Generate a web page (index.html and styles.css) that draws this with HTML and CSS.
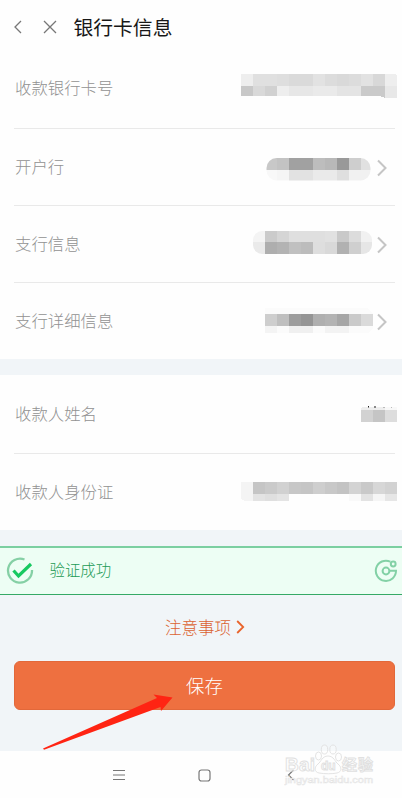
FILE: index.html
```html
<!DOCTYPE html>
<html lang="zh-CN">
<head>
<meta charset="utf-8">
<title>银行卡信息</title>
<link rel="stylesheet" href="styles.css">
</head>
<body>
<main class="screen">
  <header class="topbar">
    <svg class="back" width="10" height="16" viewBox="0 0 10 16"><path d="M8 2 2 8l6 6"/></svg>
    <svg class="close" width="14" height="14" viewBox="0 0 14 14"><path d="m1 1 12 12M13 1 1 13"/></svg>
    <h1>银行卡信息</h1>
  </header>

  <section class="card">
    <div class="row first"><span>收款银行卡号</span>
      <svg class="mask wide" width="156" height="24" shape-rendering="crispEdges">
        <path fill="#eee" d="M0 0h12v12H0z"/><path fill="#e0e0e0" d="M12 0h24v12H12z"/><path fill="#dedede" d="M36 0h12v12H36z"/><path fill="#dadada" d="M48 0h24v12H48z"/><path fill="#e2e2e2" d="M72 0h12v12H72z"/><path fill="#dcdcdc" d="M84 0h12v12H84z"/><path fill="#d9d9d9" d="M96 0h12v12H96z"/><path fill="#dcdcdc" d="M108 0h12v12h-12z"/><path fill="#e2e2e2" d="M120 0h12v12h-12z"/><path fill="#d8d8d8" d="M132 0h12v12h-12z"/><path fill="#eee" d="M144 0h10l2 2v10h-12z"/>
        <path fill="#c8c8c8" d="M0 12h12v10H0z"/><path fill="#d9d9d9" d="M12 12h12v10H12z"/><path fill="#d1d1d1" d="M24 12h12v10H24z"/><path fill="#eee" d="M36 12h12v10H36z"/><path fill="#e7e7e7" d="M48 12h24v10H48z"/><path fill="#eaeaea" d="M72 12h24v10H72z"/><path fill="#e4e4e4" d="M96 12h24v10H96z"/><path fill="#cacaca" d="M120 12h24v12l-6-2h-18z"/><path fill="#e8e8e8" d="M144 12h12v12h-12z"/>
      </svg>
    </div>
    <div class="row bank"><span>开户行</span>
      <svg class="mask" width="132" height="24">
        <defs><clipPath id="pillA"><rect x="25.500" y="1" width="104" height="22.500" rx="10"/></clipPath></defs>
        <g clip-path="url(#pillA)" shape-rendering="crispEdges">
          <path fill="#c8c8c8" d="M24 1h12v12H24z"/><path fill="#c3c3c3" d="M36 1h12v12H36z"/><path fill="#a1a1a1" d="M48 1h24v12H48z"/><path fill="#bdbdbd" d="M72 1h12v12H72z"/><path fill="#b8b8b8" d="M84 1h12v12H84z"/><path fill="#999" d="M96 1h12v12H96z"/><path fill="#cecece" d="M108 1h12v12h-12z"/><path fill="#e1e1e1" d="M120 1h12v12h-12z"/>
          <path fill="#f8f8f8" d="M24 13h12v11H24z"/><path fill="#f5f5f5" d="M36 13h12v11H36z"/><path fill="#e2e2e2" d="M48 13h24v11H48z"/><path fill="#eaeaea" d="M72 13h24v11H72z"/><path fill="#dfdfdf" d="M96 13h12v11H96z"/><path fill="#f1f1f1" d="M108 13h24v11h-24z"/>
        </g>
      </svg>
      <svg class="more" width="10" height="18" viewBox="0 0 10 18"><path d="m1 1.500 7.500 7.500L1 16.500"/></svg>
    </div>
    <div class="row branch"><span>支行信息</span>
      <svg class="mask" width="132" height="24">
        <defs><clipPath id="pillB"><rect x="12" y="0" width="119" height="23" rx="9"/></clipPath></defs>
        <g clip-path="url(#pillB)" shape-rendering="crispEdges">
          <path fill="#f4f4f4" d="M12 0h12v11H12z"/><path fill="#cbcbcb" d="M24 0h12v11H24z"/><path fill="#d5d5d5" d="M36 0h12v11H36z"/><path fill="#dfdfdf" d="M48 0h36v11H48z"/><path fill="#e1e1e1" d="M84 0h12v11H84z"/><path fill="#c9c9c9" d="M96 0h12v11H96z"/><path fill="#dcdcdc" d="M108 0h12v11h-12z"/><path fill="#f1f1f1" d="M120 0h12v11h-12z"/>
          <path fill="#eaeaea" d="M12 11h12v12H12z"/><path fill="#aeaeae" d="M24 11h12v12H24z"/><path fill="#b3b3b3" d="M36 11h12v12H36z"/><path fill="#c0c0c0" d="M48 11h12v12H48z"/><path fill="#bcbcbc" d="M60 11h12v12H60z"/><path fill="#dedede" d="M72 11h12v12H72z"/><path fill="#d9d9d9" d="M84 11h12v12H84z"/><path fill="#b1b1b1" d="M96 11h12v12H96z"/><path fill="#cfcfcf" d="M108 11h12v12h-12z"/><path fill="#e6e6e6" d="M120 11h12v12h-12z"/>
        </g>
      </svg>
      <svg class="more" width="10" height="18" viewBox="0 0 10 18"><path d="m1 1.500 7.500 7.500L1 16.500"/></svg>
    </div>
    <div class="row last"><span>支行详细信息</span>
      <svg class="mask" width="132" height="26" shape-rendering="crispEdges">
        <path fill="#fbfbfb" d="M24 0h103l5 6v14l-5 5H24z"/>
        <path fill="#cecece" d="M24 6h12v12H24z"/><path fill="#bfbfbf" d="M36 6h12v12H36z"/><path fill="#9d9d9d" d="M48 6h12v12H48z"/><path fill="#959595" d="M60 6h12v12H60z"/><path fill="#afafaf" d="M72 6h12v12H72z"/><path fill="#b3b3b3" d="M84 6h12v12H84z"/><path fill="#a6a6a6" d="M96 6h12v12H96z"/><path fill="#cacaca" d="M108 6h12v12h-12z"/><path fill="#dadada" d="M120 6h12v12h-12z"/>
        <path fill="#f4f4f4" d="M24 18h12v7H24z"/><path fill="#f0f0f0" d="M48 18h24v7H48z"/><path fill="#f3f3f3" d="M84 18h24v7H84z"/>
      </svg>
      <svg class="more" width="10" height="18" viewBox="0 0 10 18"><path d="m1 1.500 7.500 7.500L1 16.500"/></svg>
    </div>
  </section>

  <section class="card payee">
    <div class="row name"><span>收款人姓名</span>
      <svg class="mask wide" width="36" height="18" shape-rendering="crispEdges">
        <path fill="#eee" d="M1 3h23v3H0V4z"/><path fill="#f8f8f8" d="M24 3h12v3H24z"/>
        <path fill="#d2d2d2" d="M0 6h12v12H0z"/><path fill="#c5c5c5" d="M12 6h12v12H12z"/><path fill="#ddd" d="M24 6h12v12H24z"/>
        <path fill="#222" d="M7 2h1v1H7z"/><path fill="#888" d="M7 3h1v1H7zM13 2h2v2h-2z"/><path fill="#bbb" d="M22 3h2v1h-2zM30 3h1v1h-1z"/>
      </svg>
    </div>
    <div class="row last identity"><span>收款人身份证</span>
      <svg class="mask wide" width="156" height="19" shape-rendering="crispEdges">
        <path fill="#f4f4f4" d="M0 0h12v19H4l-4-2z"/><path fill="#c5c5c5" d="M12 0h12v12H12z"/><path fill="#cacaca" d="M24 0h12v12H24z"/><path fill="#d1d1d1" d="M36 0h12v12H36z"/><path fill="#c7c7c7" d="M48 0h12v12H48z"/><path fill="#c5c5c5" d="M60 0h12v12H60z"/><path fill="#cecece" d="M72 0h12v12H72z"/><path fill="#c8c8c8" d="M84 0h12v12H84z"/><path fill="#c3c3c3" d="M96 0h12v12H96z"/><path fill="#d3d3d3" d="M108 0h12v12h-12z"/><path fill="#c9c9c9" d="M120 0h12v12h-12z"/><path fill="#d7d7d7" d="M132 0h12v12h-12z"/><path fill="#d2d2d2" d="M144 0h12v12h-12z"/>
        <path fill="#e3e3e3" d="M12 12h12v7H12z"/><path fill="#dfdfdf" d="M24 12h12v7H24z"/><path fill="#e4e4e4" d="M36 12h12v7H36z"/><path fill="#f9f9f9" d="M108 12h12v7h-12z"/><path fill="#e3e3e3" d="M120 12h12v7h-12z"/><path fill="#f5f5f5" d="M132 12h12v7h-12z"/><path fill="#e6e6e6" d="M144 12h12v7h-12z"/>
      </svg>
    </div>
  </section>

  <div class="verified">
    <svg class="check" width="28" height="28" viewBox="0 0 28 28"><path class="ring" d="M18.500 2.500A12 12 0 1 0 26 13"/><path class="tick" d="m7.500 13.500 5 5.500L25 7"/></svg>
    <span>验证成功</span>
    <svg class="brand" width="24" height="24" viewBox="0 0 24 24"><path d="M16.300 2.700A10.100 10.100 0 1 0 22 11.700h-6.500"/><circle cx="12" cy="12" r="3.400"/><circle cx="19.200" cy="5" r="2.400"/></svg>
  </div>

  <a class="notice"><span>注意事项</span><svg width="9" height="14" viewBox="0 0 9 14"><path d="m1.200 1 6 6-6 6"/></svg></a>
  <button class="save">保存</button>

  <nav class="navbar">
    <svg width="12" height="12" viewBox="0 0 12 12"><path d="M0 1.500h12M0 6h12M0 10.500h12"/></svg>
    <svg width="13" height="13" viewBox="0 0 13 13"><rect x="1" y="1" width="11" height="11" rx="2.500"/></svg>
    <svg width="8" height="12" viewBox="0 0 8 12"><path d="M6.500 1 1.500 6l5 5"/></svg>
  </nav>

  <svg class="pointer" width="132" height="58" viewBox="0 0 132 58"><path d="M0 54.500 114 4l-3.500-3.500 19 3L118 17l-.5-4L1 55.800z"/></svg>
  <svg class="watermark" width="94" height="46" viewBox="0 0 94 46">
    <text class="logo" x="1" y="28" textLength="30">Bai</text>
    <path d="M35 30c-5-1-5-6-1-9 3-2 4-8 10-8s7 6 10 8c4 3 4 8-1 9-5 1-12 1-18 0z"/>
    <ellipse cx="34.500" cy="13" rx="3" ry="4"/><ellipse cx="40.500" cy="6.500" rx="3.200" ry="4.500"/><ellipse cx="49" cy="6.500" rx="3.200" ry="4.500"/><ellipse cx="54.500" cy="14" rx="3" ry="4"/>
    <text class="du" x="37" y="27">du</text>
    <text class="cn" x="58" y="27" textLength="31">经验</text>
    <text class="site" x="1" y="40" textLength="88" lengthAdjust="spacingAndGlyphs">jingyan.baidu.com</text>
  </svg>
</main>
</body>
</html>
```
FILE: styles.css
```css
* { box-sizing: border-box; }
body {
  margin: 0;
  background: #f1f5f8;
  font-family: "Noto Sans CJK SC", sans-serif;
  font-weight: 300;
}
svg { display: block; flex: none; fill: none; }
.screen {
  position: relative;
  width: 402px;
  height: 798px;
  overflow: hidden;
  display: flex;
  flex-direction: column;
}
.topbar {
  height: 52px;
  flex: none;
  display: flex;
  align-items: center;
  padding: 1px 0 0 13px;
  background: #fefefe;
}
.topbar svg { stroke: #777; stroke-width: 1.3; }
.close { margin-left: 20px; }
h1 {
  margin: 0 0 0 16.5px;
  font-size: 19.8px;
  line-height: 28px;
  font-weight: 400;
  color: #171717;
}
.card { background: #fefefe; padding: 0 7px 0 14px; flex: none; }
.payee { margin-top: 16px; }
.row {
  height: 77px;
  display: flex;
  align-items: center;
  padding: 0 8px 0 1px;
  border-bottom: 1px solid #e9e9e9;
  color: #929292;
  font-size: 16.4px;
  line-height: 24px;
}
.row.last { height: 76px; border-bottom: 0; }
.row.name { height: 79px; padding-bottom: 2px; }
.row span { flex: 1; padding-bottom: 2px; }
.row.name span { padding-bottom: 0; }
.mask { margin-right: 4px; }
.mask.wide { margin-right: -10px; }
.first { padding-bottom: 4px; }
.first .mask { margin-bottom: 4px; }
.bank .mask { margin-top: 4px; }
.branch .mask { margin-bottom: 2px; }
.identity .mask { margin-bottom: 2px; }
.more { stroke: #c5c5c5; stroke-width: 2; margin-top: 2px; }
.verified {
  height: 49px;
  flex: none;
  margin-top: 16px;
  display: flex;
  align-items: center;
  padding: 0 4px 0 6px;
  background: #edfef4;
  border-top: 2px solid #7ccfa1;
  border-bottom: 1px solid #36a966;
  color: #229a55;
  font-size: 15.4px;
}
.verified span { flex: 1; margin-left: 15.5px; padding-bottom: 4px; }
.ring { stroke: #85d0a5; stroke-width: 2.3; }
.tick { stroke: #18c961; stroke-width: 3.2; }
.brand { stroke: #83d1a6; stroke-width: 2; }
.notice {
  height: 24px;
  flex: none;
  margin: 20px 0 22px 8px;
  display: flex;
  align-items: center;
  justify-content: center;
  gap: 5px;
  color: #db6332;
  font-size: 16.5px;
}
.notice svg { stroke: #e9642c; stroke-width: 1.8; }
.save {
  height: 49px;
  flex: none;
  margin: 0 7px 0 14px;
  padding: 0 0 2px;
  border: 1px solid #e2683a;
  border-radius: 6px;
  background: #ee7040;
  color: #fff;
  font: 300 18.4px/44px "Noto Sans CJK SC", sans-serif;
}
.navbar {
  height: 47px;
  flex: none;
  margin-top: auto;
  display: flex;
  align-items: center;
  gap: 79px;
  padding: 1px 0 0 113px;
  background: #fefefe;
}
.navbar svg { stroke: #777; stroke-width: 1.2; }
.navbar svg:nth-child(2) { margin-left: -6px; }
.navbar svg:nth-child(3) { margin-left: -3px; }
.pointer { position: absolute; left: 43px; top: 694px; fill: #ff2413; }
.watermark {
  position: absolute;
  left: 284px;
  top: 743px;
  fill: rgba(255, 255, 255, .3);
  stroke: #e0e0e0;
  stroke-width: .9;
}
.watermark text { font-family: "Liberation Sans", "Noto Sans CJK SC", sans-serif; font-weight: 700; }
.watermark .logo { font-size: 19px; }
.watermark .du { font-size: 12px; }
.watermark .cn { font-size: 15px; }
.watermark .site { font-size: 9px; stroke-width: .5; stroke: #e4e4e4; font-weight: 400; }
```
